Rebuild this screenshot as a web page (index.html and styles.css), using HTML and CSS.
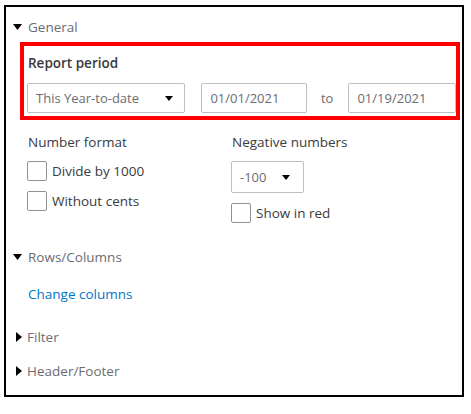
FILE: index.html
```html
<!DOCTYPE html>
<html>
<head>
<meta charset="utf-8">
<link rel="stylesheet" href="styles.css">
</head>
<body>
<div class="panel">
  <div class="section-head">
    <svg class="tri-down" width="9" height="6" viewBox="0 0 9 6"><path d="M0 0H9L4.5 6Z" fill="#000"/></svg>
    <span>General</span>
  </div>

  <div class="period-box">
    <div class="period-label">Report period</div>
    <div class="period-row">
      <div class="select period-select">
        <span>This Year-to-date</span>
        <svg width="8" height="5" viewBox="0 0 8 5"><path d="M0 0H8L4 5Z" fill="#000"/></svg>
      </div>
      <div class="date-input date1">01/01/2021</div>
      <span class="to">to</span>
      <div class="date-input date2">01/19/2021</div>
    </div>
  </div>

  <div class="options">
    <div class="col col-left">
      <div class="opt-label">Number format</div>
      <label class="check"><span class="box"></span><span>Divide by 1000</span></label>
      <label class="check"><span class="box"></span><span>Without cents</span></label>
    </div>
    <div class="col col-right">
      <div class="opt-label">Negative numbers</div>
      <div class="select neg-select">
        <span>-100</span>
        <svg width="8" height="5" viewBox="0 0 8 5"><path d="M0 0H8L4 5Z" fill="#000"/></svg>
      </div>
      <label class="check"><span class="box"></span><span>Show in red</span></label>
    </div>
  </div>

  <div class="section-head rows-head">
    <svg class="tri-down" width="9" height="6" viewBox="0 0 9 6"><path d="M0 0H9L4.5 6Z" fill="#000"/></svg>
    <span>Rows/Columns</span>
  </div>
  <a class="link">Change columns</a>

  <div class="section-head closed filter-head">
    <svg class="tri-right" width="6" height="10" viewBox="0 0 6 10"><path d="M0 0V10L6 5Z" fill="#000"/></svg>
    <span>Filter</span>
  </div>
  <div class="section-head closed hf-head">
    <svg class="tri-right" width="6" height="10" viewBox="0 0 6 10"><path d="M0 0V10L6 5Z" fill="#000"/></svg>
    <span>Header/Footer</span>
  </div>
</div>
</body>
</html>
```

FILE: styles.css
```css
* { box-sizing: border-box; }
body {
  margin: 0;
  background: #fff;
  font-family: "Open Sans", "Noto Sans", sans-serif;
  font-size: 13.5px;
  color: #393a3d;
}
.panel {
  margin: 5px 0 0 4px;
  width: 460px;
  height: 392px;
  border: 2px solid #000;
  padding: 10px 0 0 7px;
  display: flex;
  flex-direction: column;
  align-items: flex-start;
}
.section-head {
  display: flex;
  align-items: center;
  height: 20px;
  color: #6b6c72;
  font-size: 13.5px;
}
.section-head .tri-down { margin-right: 6px; }
.section-head.closed { padding-left: 3px; }
.section-head .tri-right { margin-right: 5px; }

.period-box {
  margin: 5px 0 0 7px;
  width: 440px;
  height: 78px;
  border: 4px solid #f00;
  padding: 7px 0 0 4px;
}
.period-label {
  height: 20px;
  line-height: 20px;
  font-weight: 600;
  font-size: 13.5px;
  color: #393a3d;
}
.period-row {
  margin-top: 10px;
  display: flex;
  align-items: center;
  margin-left: -1px;
}
.select, .date-input {
  height: 30px;
  border: 1px solid #babec5;
  border-radius: 2px;
  display: flex;
  align-items: center;
  color: #6b6c72;
  font-size: 13px;
  background: #fff;
}
.period-select {
  width: 159px;
  padding: 0 11px 0 8px;
  justify-content: space-between;
}
.date-input { padding-left: 8px; }
.date1 { width: 106px; margin-left: 16px; }
.to { margin: 0 15px 0 14px; color: #6b6c72; font-size: 13px; }
.date2 { width: 108px; }

.options {
  margin: 12px 0 0 14px;
  display: flex;
}
.col { display: flex; flex-direction: column; align-items: flex-start; }
.col-left { width: 204px; }
.opt-label {
  height: 20px;
  line-height: 20px;
  padding-left: 1px;
  font-size: 13.5px;
  color: #393a3d;
}
.check {
  display: flex;
  align-items: center;
  height: 20px;
  margin-top: 9px;
  font-weight: 500;
  font-size: 13.5px;
  color: #393a3d;
}
.col-left .check + .check { margin-top: 10px; }
.box {
  width: 20px;
  height: 20px;
  border: 1px solid #8d9096;
  border-radius: 2px;
  margin-right: 5px;
  background: #fff;
}
.neg-select {
  margin-top: 9px;
  width: 73px;
  height: 32px;
  padding: 0 13px 0 8px;
  justify-content: space-between;
}
.col-right .check { margin-top: 10px; }

.rows-head { margin-top: 24px; }
.link {
  margin: 17px 0 0 15px;
  height: 20px;
  line-height: 20px;
  color: #0077c5;
  font-size: 13.5px;
}
.filter-head { margin-top: 23px; }
.hf-head { margin-top: 14px; }
```
